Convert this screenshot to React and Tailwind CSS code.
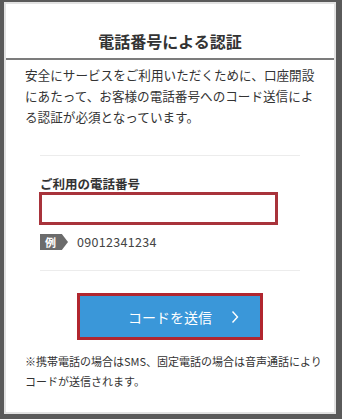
import React from 'react';

const font = { fontFamily: '"Noto Sans CJK JP", "Noto Sans", sans-serif' };

const App = () => {
  return (
    <div className="min-h-screen bg-[#5a5a5a] pt-[2px] pl-[4px]" style={font}>
      <div className="w-[332px] h-[412px] bg-white border-2 border-[#e2e2e2] text-[#333]">
        {/* Header */}
        <div className="h-[56px] pt-[26px] border-b-2 border-[#7c7c7c] text-center">
          <h1 className="text-[16px] leading-[22px] font-semibold text-[#333]">電話番号による認証</h1>
        </div>

        {/* Description */}
        <p className="px-[19px] pt-[4px] text-[12.6px] leading-[21px]">
          安全にサービスをご利用いただくために、口座開設にあたって、お客様の電話番号へのコード送信による認証が必須となっています。
        </p>

        {/* Phone form */}
        <div className="mx-[34px] mt-[28px] border-t border-[#ececec] pt-[20px]">
          <label className="block text-[12.5px] leading-[16px] font-semibold">ご利用の電話番号</label>
          <input
            type="tel"
            className="block -ml-px w-[239px] h-[33px] border-[3px] border-[#a8333b] outline-none px-2 text-[13px]"
          />
          <div className="mt-[9px] h-[16px] flex items-center gap-[9px]">
            <span className="w-[28px] h-[16px] bg-[#6b6b6b] text-white text-[11px] font-bold leading-[16px] pl-[5px] [clip-path:polygon(0_0,78%_0,100%_50%,78%_100%,0_100%)]">
              例
            </span>
            <span className="text-[12.5px] text-[#444] tracking-[0.3px]">09012341234</span>
          </div>
          <div className="mt-[20px] border-t border-[#ececec]"></div>
        </div>

        {/* Submit */}
        <div className="mt-[22px] flex justify-center">
          <button className="relative w-[186px] h-[47px] border-[3px] border-[#b1262f] bg-[#3a97d9] text-white text-[14px] leading-[20px] p-0">
            <span className="block">コードを送信</span>
            <svg
              className="absolute right-[21px] top-1/2 -translate-y-1/2"
              width="8"
              height="13"
              viewBox="0 0 8 13"
              fill="none"
              stroke="white"
              strokeWidth="1.4"
            >
              <polyline points="1.5,1 6.5,6.5 1.5,12" />
            </svg>
          </button>
        </div>

        {/* Note */}
        <p className="pl-[19px] pr-[10px] mt-[11px] text-[11px] leading-[20px]">
          ※携帯電話の場合はSMS、固定電話の場合は音声通話によりコードが送信されます。
        </p>
      </div>
    </div>
  );
};

export default App;
